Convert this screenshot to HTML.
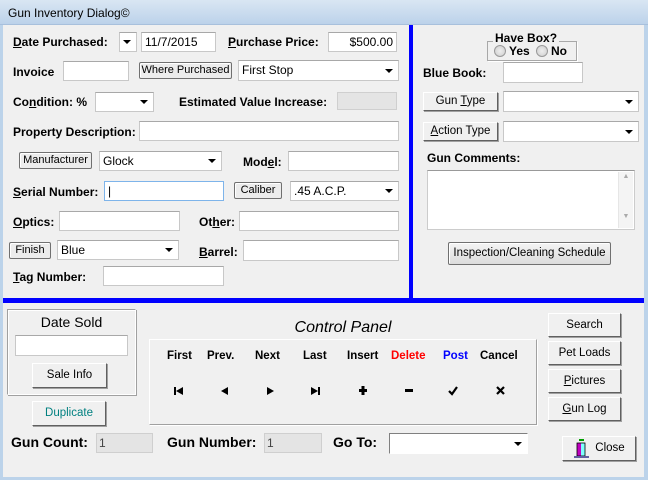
<!DOCTYPE html>
<html><head><meta charset="utf-8"><style>
*{margin:0;padding:0;box-sizing:border-box}
body{width:648px;height:480px;overflow:hidden;background:#f0f0f0;font-family:"Liberation Sans",Arial,sans-serif;font-size:12px;color:#000;position:relative}
.a{position:absolute}
.l{position:absolute;font-weight:bold;font-size:12px;white-space:nowrap;line-height:14px}
.i{position:absolute;background:#fff;border:1px solid #c8c8c8;border-top-color:#a8a8a8;font-size:12px;line-height:18px;padding-left:3px;white-space:nowrap}
.b{position:absolute;background:#ececec;border:1px solid #707070;border-radius:2px;font-size:11px;text-align:center;white-space:nowrap;box-shadow:inset 1px 1px 0 #fff;overflow:hidden}
.b3{position:absolute;background:#f0f0f0;border:1px solid;border-color:#fff #606060 #606060 #fff;box-shadow:1px 1px 0 #a0a0a0;font-size:11.5px;text-align:center;white-space:nowrap}
.dd::after{content:"";position:absolute;right:5px;top:50%;margin-top:-2px;border-left:4px solid transparent;border-right:4px solid transparent;border-top:4px solid #000}
u{text-decoration:underline}
.nv{position:absolute;top:350px;font-weight:bold;font-size:11.5px}
</style></head><body>
<div class="a" style="left:0;top:0;width:648px;height:480px;border:3px solid #bcd3ea;border-top:0;border-right-width:4px"></div>
<div class="a" style="left:0;top:0;width:648px;height:25px;background:linear-gradient(#d9e6f3,#bcd2ea);border-bottom:1px solid #a8c0dc"></div>
<div class="a" style="left:8px;top:6px;font-size:12px">Gun Inventory Dialog©</div>
<div class="a" style="left:409px;top:25px;width:4px;height:275px;background:#0000ff"></div>
<div class="a" style="left:3px;top:298px;width:641px;height:5px;background:#0000ff"></div>

<div class="l" style="left:13px;top:35px"><u>D</u>ate Purchased:</div>
<div class="i dd" style="left:119px;top:32px;width:18px;height:20px"></div>
<div class="i" style="left:141px;top:32px;width:75px;height:20px">11/7/2015</div>
<div class="l" style="left:228px;top:35px"><u>P</u>urchase Price:</div>
<div class="i" style="left:328px;top:32px;width:69px;height:20px;text-align:right;padding-right:3px">$500.00</div>

<div class="l" style="left:13px;top:65px">Invoice</div>
<div class="i" style="left:63px;top:61px;width:66px;height:20px"></div>
<div class="b" style="left:139px;top:62px;width:93px;height:17px;line-height:15px">Where Purchased</div>
<div class="i dd" style="left:238px;top:60px;width:161px;height:21px">First Stop</div>

<div class="l" style="left:13px;top:95px">Co<u>n</u>dition: %</div>
<div class="i dd" style="left:95px;top:92px;width:59px;height:20px"></div>
<div class="l" style="left:179px;top:95px">Estimated Value Increase:</div>
<div class="a" style="left:337px;top:92px;width:60px;height:18px;background:#e4e4e4;border:1px solid #cfcfcf"></div>

<div class="l" style="left:13px;top:125px">Property Description:</div>
<div class="i" style="left:139px;top:121px;width:260px;height:20px"></div>

<div class="b" style="left:19px;top:152px;width:73px;height:17px;line-height:15px">Manufacturer</div>
<div class="i dd" style="left:99px;top:151px;width:123px;height:20px">Glock</div>
<div class="l" style="left:243px;top:155px">Mod<u>e</u>l:</div>
<div class="i" style="left:288px;top:151px;width:111px;height:20px"></div>

<div class="l" style="left:13px;top:185px"><u>S</u>erial Number:</div>
<div class="i" style="left:104px;top:181px;width:120px;height:20px;border-color:#7eb4ea">|</div>
<div class="b" style="left:234px;top:182px;width:48px;height:17px;line-height:15px">Caliber</div>
<div class="i dd" style="left:290px;top:181px;width:109px;height:20px">.45 A.C.P.</div>

<div class="l" style="left:13px;top:215px"><u>O</u>ptics:</div>
<div class="i" style="left:59px;top:211px;width:121px;height:20px"></div>
<div class="l" style="left:199px;top:215px">Ot<u>h</u>er:</div>
<div class="i" style="left:239px;top:211px;width:160px;height:20px"></div>

<div class="b" style="left:9px;top:242px;width:42px;height:17px;line-height:15px">Finish</div>
<div class="i dd" style="left:57px;top:240px;width:122px;height:20px">Blue</div>
<div class="l" style="left:199px;top:245px"><u>B</u>arrel:</div>
<div class="i" style="left:243px;top:240px;width:156px;height:21px"></div>

<div class="l" style="left:13px;top:270px"><u>T</u>ag Number:</div>
<div class="i" style="left:103px;top:266px;width:121px;height:20px"></div>

<!-- right panel -->
<div class="a" style="left:487px;top:41px;width:90px;height:20px;border:1px solid #a8a8a8;box-shadow:1px 1px 0 #fff"></div>
<div class="l" style="left:493px;top:31px;background:#f0f0f0;padding:0 2px">Have Box?</div>
<div class="a" style="left:494px;top:45px;width:12px;height:12px;border-radius:50%;border:1px solid #999;background:radial-gradient(#eee,#ccc)"></div>
<div class="l" style="left:509px;top:44px">Yes</div>
<div class="a" style="left:536px;top:45px;width:12px;height:12px;border-radius:50%;border:1px solid #999;background:radial-gradient(#eee,#ccc)"></div>
<div class="l" style="left:551px;top:44px">No</div>
<div class="l" style="left:423px;top:66px">Blue Book:</div>
<div class="i" style="left:503px;top:62px;width:80px;height:21px"></div>
<div class="b3" style="left:423px;top:92px;width:75px;height:19px;line-height:17px">Gun <u>T</u>ype</div>
<div class="i dd" style="left:503px;top:91px;width:136px;height:21px"></div>
<div class="b3" style="left:423px;top:122px;width:75px;height:19px;line-height:17px"><u>A</u>ction Type</div>
<div class="i dd" style="left:503px;top:121px;width:136px;height:21px"></div>
<div class="l" style="left:427px;top:151px">Gun Comments:</div>
<div class="a" style="left:427px;top:170px;width:208px;height:60px;background:#fff;border:1px solid #ccc;border-top-color:#999"></div>
<div class="a" style="left:618px;top:172px;width:15px;height:56px;background:#f4f4f4;border-left:1px solid #e6e6e6;font-size:7px;color:#aaa;text-align:center;line-height:10px">▲<br><br><br><br>▼</div>
<div class="b" style="left:448px;top:242px;width:163px;height:23px;line-height:21px;font-size:11.5px;background:linear-gradient(#f4f4f4,#dcdcdc)">Inspection/Cleaning Schedule</div>

<!-- bottom -->
<div class="a" style="left:7px;top:309px;width:129px;height:86px;border:1px solid;border-color:#a0a0a0 #fff #fff #a0a0a0;box-shadow:1px 1px 0 #a0a0a0,inset 1px 1px 0 #fff"></div>
<div class="a" style="left:7px;top:314px;width:129px;text-align:center;font-size:14px">Date Sold</div>
<div class="i" style="left:15px;top:335px;width:113px;height:21px"></div>
<div class="b3" style="left:32px;top:363px;width:75px;height:25px;line-height:23px">Sale Info</div>
<div class="b3" style="left:32px;top:401px;width:74px;height:25px;line-height:23px;color:#008080">Duplicate</div>
<div class="a" style="left:149px;top:319px;width:388px;text-align:center;font-size:16px;font-style:italic">Control Panel</div>
<div class="a" style="left:149px;top:339px;width:388px;height:86px;border:1px solid;border-color:#fff #a0a0a0 #a0a0a0 #fff;box-shadow:1px 1px 0 #fff"></div>
<div class="nv" style="left:167px">First</div>
<div class="nv" style="left:207px">Prev.</div>
<div class="nv" style="left:255px">Next</div>
<div class="nv" style="left:303px">Last</div>
<div class="nv" style="left:347px">Insert</div>
<div class="nv" style="left:391px;color:#ff0000">Delete</div>
<div class="nv" style="left:443px;color:#0000ff">Post</div>
<div class="nv" style="left:480px">Cancel</div>
<svg class="a" style="left:149px;top:380px" width="388" height="22">
<g fill="#000">
<rect x="25" y="7" width="2" height="8"/><polygon points="27,11 34,7 34,15"/>
<polygon points="72,11 79,7 79,15"/>
<polygon points="118,7 125,11 118,15"/>
<polygon points="162,7 169,11 162,15"/><rect x="169" y="7" width="2" height="8"/>
<rect x="210" y="9" width="8" height="3"/><rect x="212.5" y="6" width="3" height="9"/>
<rect x="256" y="9" width="8" height="3"/>
</g>
<path d="M300 11 L303 14 L308 7" stroke="#000" stroke-width="2.2" fill="none"/>
<path d="M348 7 L355 14 M355 7 L348 14" stroke="#000" stroke-width="2.2" fill="none"/>
</svg>
<div class="b3" style="left:548px;top:313px;width:73px;height:24px;line-height:22px">Search</div>
<div class="b3" style="left:548px;top:341px;width:73px;height:24px;line-height:22px">Pet Loads</div>
<div class="b3" style="left:548px;top:369px;width:73px;height:24px;line-height:22px"><u>P</u>ictures</div>
<div class="b3" style="left:548px;top:397px;width:73px;height:24px;line-height:22px"><u>G</u>un Log</div>
<div class="b3" style="left:562px;top:436px;width:74px;height:25px;line-height:23px;padding-left:22px">Close</div>
<svg class="a" style="left:574px;top:439px" width="16" height="20">
<rect x="5" y="0" width="5" height="2" fill="#00a000"/>
<rect x="3" y="4" width="4" height="13" fill="#c000c0"/>
<rect x="7" y="4" width="4" height="13" fill="#80ffff"/>
<rect x="3" y="4" width="8" height="13" fill="none" stroke="#000" stroke-width="0.8"/>
<rect x="0" y="17" width="15" height="2" fill="#6060a0"/>
</svg>
<div class="a" style="left:11px;top:434px;font-weight:bold;font-size:14px">Gun Count:</div>
<div class="a" style="left:96px;top:433px;width:57px;height:20px;background:#e4e4e4;border:1px solid #cfcfcf;padding-left:2px;line-height:18px;color:#444">1</div>
<div class="a" style="left:167px;top:434px;font-weight:bold;font-size:14px">Gun Number:</div>
<div class="a" style="left:264px;top:433px;width:58px;height:20px;background:#e4e4e4;border:1px solid #cfcfcf;padding-left:2px;line-height:18px;color:#444">1</div>
<div class="a" style="left:333px;top:434px;font-weight:bold;font-size:14px">Go To:</div>
<div class="i dd" style="left:389px;top:433px;width:139px;height:21px;border-color:#808080 #fff #fff #808080"></div>
</body></html>
